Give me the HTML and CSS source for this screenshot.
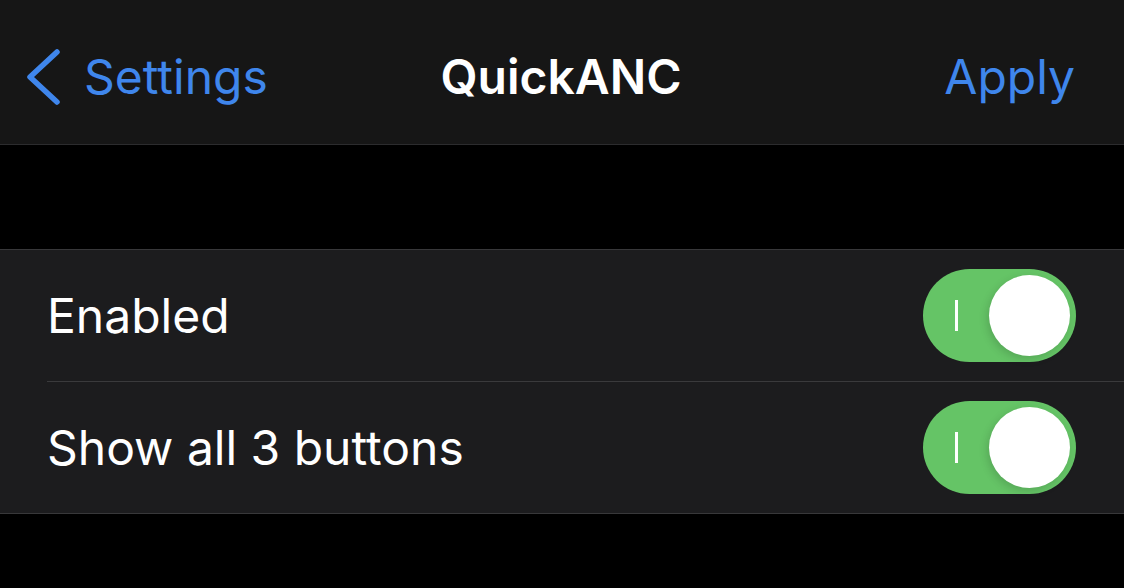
FILE: index.html
```html
<!DOCTYPE html>
<html>
  <head>
    <title>QuickANC</title>
    <link rel="stylesheet" href="styles.css">
  </head>
  <body>
    <header class="navbar">
      <a class="nav-back" href="#">
        <svg class="chevron" width="36" height="56" viewBox="0 0 36 56">
          <polyline points="31,3 4,28 31,53" fill="none" stroke="currentColor" stroke-width="5.5" stroke-linecap="round" stroke-linejoin="round"/>
        </svg>
        <span>Settings</span>
      </a>
      <h1 class="nav-title">QuickANC</h1>
      <a class="nav-action" href="#">Apply</a>
    </header>

    <div class="spacer"></div>

    <section class="group">
      <div class="row">
        <span class="row-label">Enabled</span>
        <label class="switch on"><span class="switch-mark"></span><span class="knob"></span></label>
      </div>
      <div class="row">
        <span class="row-label">Show all 3 buttons</span>
        <label class="switch on"><span class="switch-mark"></span><span class="knob"></span></label>
      </div>
    </section>
  </body>
</html>
```

FILE: styles.css
```css
body, html {
  height: 100%;
}
body {
  margin: 0;
  background-color: #000;
  color: #fff;
  font-family: Inter, 'Noto Sans', sans-serif;
  overflow: hidden;
}

a {
  text-decoration: none;
}

.navbar {
  height: 145px;
  box-sizing: border-box;
  background-color: #161616;
  border-bottom: 1px solid #2c2c2e;
  display: flex;
  align-items: center;
  justify-content: space-between;
  padding: 8px 49px 0 26px;
  position: relative;
}

.nav-back {
  display: flex;
  align-items: center;
  gap: 22px;
  color: #3f86ec;
  font-size: 48px;
}

.chevron {
  display: block;
  margin-top: 1px;
}

.nav-title {
  position: absolute;
  left: 0;
  right: 0;
  margin: 0;
  text-align: center;
  font-size: 48px;
  font-weight: 600;
  pointer-events: none;
  padding-right: 2px;
}

.nav-action {
  color: #3f86ec;
  font-size: 48px;
}

.spacer {
  height: 104px;
}

.group {
  background-color: #1c1c1e;
  border-top: 1px solid #38383a;
  border-bottom: 1px solid #38383a;
  padding-left: 47px;
}

.row {
  height: 131px;
  display: flex;
  align-items: center;
  justify-content: space-between;
  padding-right: 48px;
}

.row + .row {
  border-top: 1px solid #3a3a3c;
}

.row-label {
  font-size: 48px;
}

.switch {
  width: 153px;
  height: 93px;
  border-radius: 47px;
  background-color: #65c466;
  display: flex;
  align-items: center;
  justify-content: space-between;
  padding: 0 6px 0 32px;
  box-sizing: border-box;
}

.switch-mark {
  width: 3px;
  height: 31px;
  background-color: #fff;
}

.knob {
  width: 81px;
  height: 81px;
  border-radius: 50%;
  background-color: #fff;
  box-shadow: -2px 3px 8px rgba(0, 0, 0, 0.15);
}
```
